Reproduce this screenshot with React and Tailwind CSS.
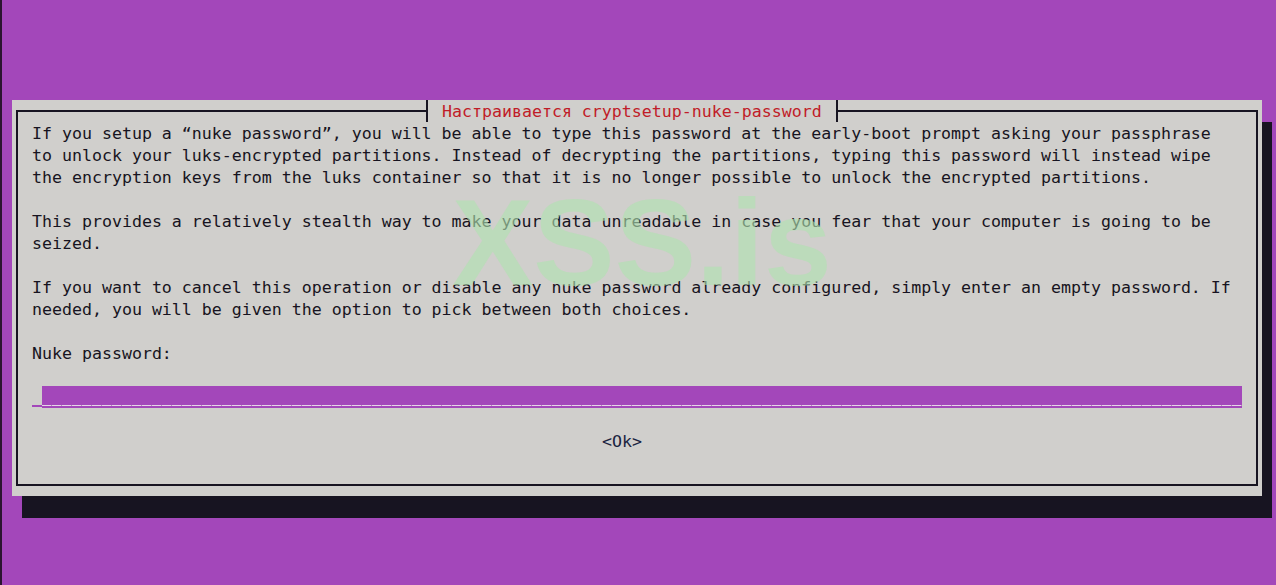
import React from "react";

const mono = { fontFamily: '"DejaVu Sans Mono", "Liberation Mono", monospace' };

function Line({ children }) {
  return <div className="h-[22px] leading-[24px] whitespace-pre">{children}</div>;
}

export default function App() {
  return (
    <div className="relative w-[1276px] h-[585px] overflow-hidden bg-[#a347ba] border-l-2 border-[#2b1530]">
      <div className="pt-[100px] pl-[10px]">
        <div
          className="w-[1250px] h-[396px] bg-[#d0cfcc] px-[4px] py-[10px] shadow-[10px_22px_0_0_#171421] text-[16.6px] text-[#171421]"
          style={mono}
        >
          <div className="relative h-full border-2 border-[#171421]">
            <div className="absolute top-[-12px] left-[408px] w-[412px] h-[22px] bg-[#d0cfcc] border-l-2 border-r-2 border-[#171421] pl-[14px] leading-[24px] whitespace-pre text-[#c01c28]">
              Настраивается cryptsetup-nuke-password
            </div>
            <div className="pl-[14px] pt-[10px]">
              <Line>If you setup a “nuke password”, you will be able to type this password at the early-boot prompt asking your passphrase</Line>
              <Line>to unlock your luks-encrypted partitions. Instead of decrypting the partitions, typing this password will instead wipe</Line>
              <Line>the encryption keys from the luks container so that it is no longer possible to unlock the encrypted partitions.</Line>
              <Line></Line>
              <Line>This provides a relatively stealth way to make your data unreadable in case you fear that your computer is going to be</Line>
              <Line>seized.</Line>
              <Line></Line>
              <Line>If you want to cancel this operation or disable any nuke password already configured, simply enter an empty password. If</Line>
              <Line>needed, you will be given the option to pick between both choices.</Line>
              <Line></Line>
              <Line>Nuke password:</Line>
              <Line></Line>
              <div className="flex h-[22px]">
                <div className="w-[10px] h-[22px] pt-[19px]">
                  <div className="h-[2px] bg-[#a347ba]"></div>
                </div>
                <div className="w-[1200px] h-[22px] bg-[#a347ba] pt-[19px]">
                  <div className="h-[1px] bg-[repeating-linear-gradient(90deg,#e6d6e8_0px,#e6d6e8_9px,#b98cc4_9px,#b98cc4_10px)]"></div>
                </div>
              </div>
              <Line></Line>
              <div className="h-[22px] leading-[24px] whitespace-pre pl-[570px] text-[#1a2440]">&lt;Ok&gt;</div>
            </div>
          </div>
        </div>
      </div>
      <div
        className="absolute left-[450px] top-[182px] text-[122px] leading-none font-bold whitespace-pre text-[rgba(176,226,176,0.62)] pointer-events-none"
        style={{ fontFamily: '"Liberation Sans", Arial, sans-serif' }}
      >
        XSS.is
      </div>
    </div>
  );
}
